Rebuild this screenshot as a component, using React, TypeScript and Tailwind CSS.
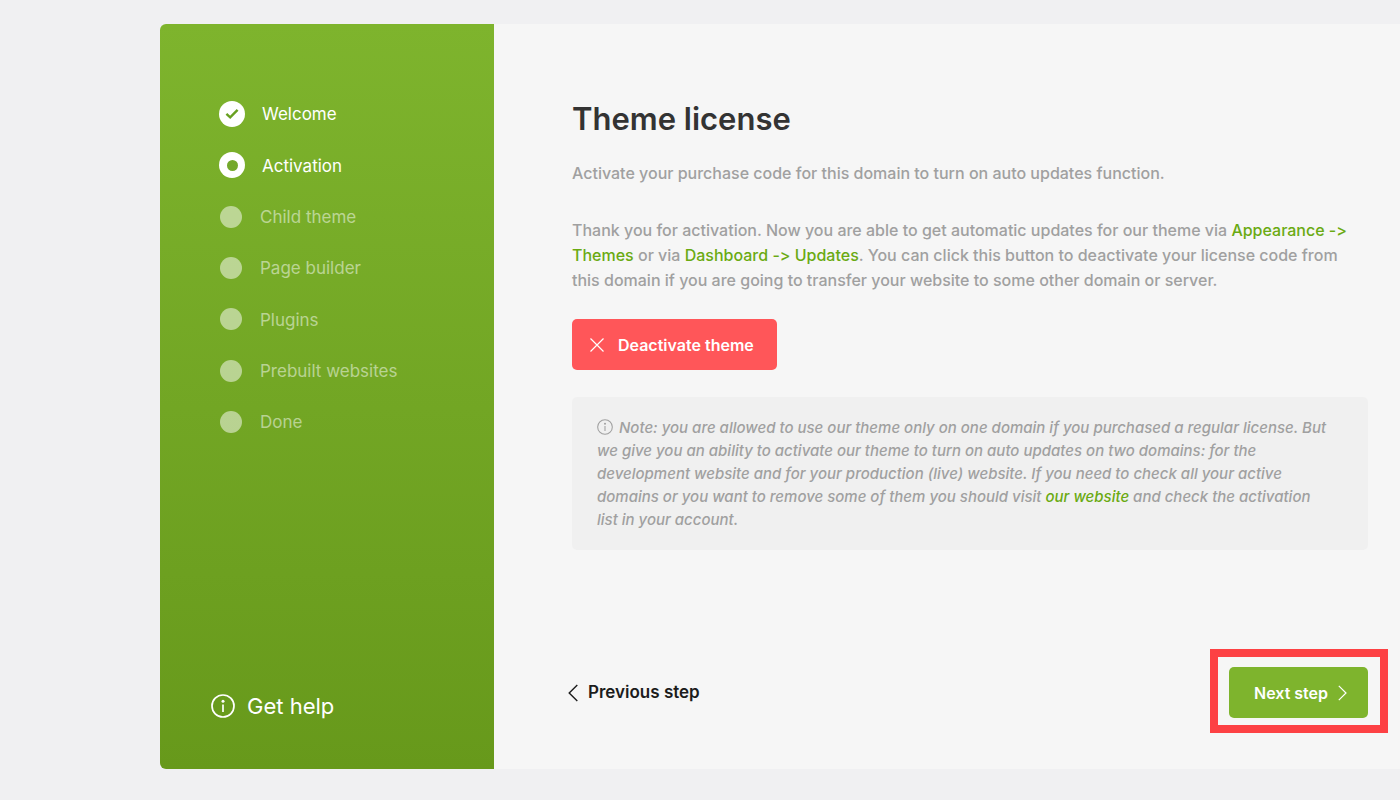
type StepState = "done" | "current" | "pending";

const steps: { label: string; state: StepState }[] = [
  { label: "Welcome", state: "done" },
  { label: "Activation", state: "current" },
  { label: "Child theme", state: "pending" },
  { label: "Page builder", state: "pending" },
  { label: "Plugins", state: "pending" },
  { label: "Prebuilt websites", state: "pending" },
  { label: "Done", state: "pending" },
];

function InfoIcon({ className, stroke }: { className: string; stroke: number }) {
  return (
    <svg viewBox="0 0 24 24" fill="none" stroke="currentColor" strokeWidth={stroke} className={className} aria-hidden="true">
      <circle cx="12" cy="12" r="11" />
      <path d="M12 10.5V18" />
      <circle cx="12" cy="7.2" r="1.5" fill="currentColor" stroke="none" />
    </svg>
  );
}

function StepMarker({ state }: { state: StepState }) {
  if (state === "pending") {
    return <span className="ml-px size-[22px] shrink-0 rounded-full bg-white/50" />;
  }
  return (
    <span className="flex size-[26px] shrink-0 items-center justify-center rounded-full bg-white text-[#68a020]">
      {state === "done" ? (
        <svg viewBox="0 0 14 12" className="h-3 w-3.5" fill="none" stroke="currentColor" strokeWidth="2.4" aria-hidden="true">
          <path d="M1.4 5.8L5.2 9.3L12.6 1.8" />
        </svg>
      ) : (
        <span className="size-[11px] rounded-full bg-[#74a92b]" />
      )}
    </span>
  );
}

function Sidebar() {
  return (
    <aside className="flex w-[334px] shrink-0 flex-col justify-between rounded-l-[6px] bg-linear-to-b from-[#7eb42d] to-[#67991b] pt-[77px] pb-12 text-white">
      <ol className="flex h-[334px] flex-col justify-between pl-[59px]">
        {steps.map((step) => (
          <li
            key={step.label}
            aria-current={step.state === "current" ? "step" : undefined}
            className={
              step.state === "pending"
                ? "flex h-[26px] items-center gap-[18px] text-[17px] text-white/50"
                : "flex h-[26px] items-center gap-[17px] text-[17px]"
            }
          >
            <StepMarker state={step.state} />
            <span className="pt-0.5">{step.label}</span>
          </li>
        ))}
      </ol>
      <a href="#help" className="flex items-center gap-3 pl-[51px] text-[22px] leading-[30px]">
        <InfoIcon className="size-6" stroke={1.7} />
        Get help
      </a>
    </aside>
  );
}

export default function App() {
  return (
    <div className="min-h-screen bg-[#f0f0f2] pt-6 pb-[31px] pl-40 font-['Inter','Liberation_Sans',sans-serif] [font-variant-ligatures:no-contextual]">
      <div className="flex min-h-[745px] rounded-l-[6px] bg-[#f6f6f6]">
        <Sidebar />
        <main className="flex min-w-0 flex-1 flex-col pt-[72px] pr-8 pb-[51px] pl-[78px] font-medium text-[#a0a0a0]">
          <h1 className="text-[31px] leading-[46px] font-semibold text-[#333333]">Theme license</h1>
          <p className="mt-[19px] text-base leading-[25px]">
            Activate your purchase code for this domain to turn on auto updates function.
          </p>
          <p className="mt-8 text-base leading-[25px]">
            Thank you for activation. Now you are able to get automatic updates for our theme via{" "}
            <a href="#themes" className="text-[#6aaa12]">Appearance -&gt; Themes</a> or via{" "}
            <a href="#updates" className="text-[#6aaa12]">Dashboard -&gt; Updates</a>. You can click this button to
            deactivate your license code from this domain if you are going to transfer your website to some other domain
            or server.
          </p>
          <button
            type="button"
            className="mt-[26px] flex h-[51px] w-[205px] items-center gap-3.5 rounded-[5px] bg-[#ff5659] pl-[18px] text-base font-semibold text-white"
          >
            <svg viewBox="0 0 14 14" className="size-3.5" fill="none" stroke="currentColor" strokeWidth="1.2" aria-hidden="true">
              <path d="M0.5 0.5L13.5 13.5M13.5 0.5L0.5 13.5" />
            </svg>
            Deactivate theme
          </button>
          <p className="mt-[27px] rounded-[5px] bg-[#f0f0f0] py-[19px] pr-9 pl-[25px] text-[15px] leading-[23px] italic">
            <InfoIcon className="mr-1.5 mb-1 inline size-4" stroke={1.6} />
            Note: you are allowed to use our theme only on one domain if you purchased a regular license. But we give
            you an ability to activate our theme to turn on auto updates on two domains: for the development website
            and for your production (live) website. If you need to check all your active domains or you want to remove
            some of them you should visit{" "}
            <a href="#website" className="text-[#6aaa12]">our website</a> and check the activation list in your
            account.
          </p>
          <div className="mt-auto flex items-center justify-between font-semibold">
            <button type="button" className="-ml-1 flex items-center gap-2.5 text-[17px] text-[#1c1c1c]">
              <svg viewBox="0 0 10 18" className="h-[18px] w-2.5" fill="none" stroke="currentColor" strokeWidth="1.4" aria-hidden="true">
                <path d="M9.3 1L1.2 9L9.3 17" />
              </svg>
              Previous step
            </button>
            <div className="relative">
              <button
                type="button"
                className="flex h-[51px] w-[139px] items-center gap-2.5 rounded-[5px] bg-[#7eb42d] pl-[25px] text-base text-white"
              >
                Next step
                <svg viewBox="0 0 9 16" className="h-4 w-[9px]" fill="none" stroke="currentColor" strokeWidth="1.2" aria-hidden="true">
                  <path d="M0.8 0.8L8 8L0.8 15.2" />
                </svg>
              </button>
              <span className="pointer-events-none absolute -top-[18px] -right-5 -bottom-[15px] -left-[19px] border-8 border-[#fd4144]" />
            </div>
          </div>
        </main>
      </div>
    </div>
  );
}
